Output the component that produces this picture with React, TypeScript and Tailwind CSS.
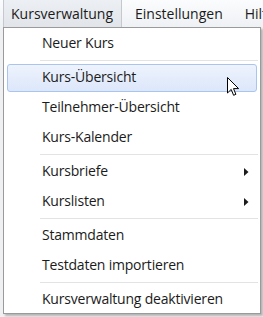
import React from "react";

type Entry = { label: string; sub?: boolean; active?: boolean } | "sep";

const entries: Entry[] = [
  { label: "Neuer Kurs" },
  "sep",
  { label: "Kurs-Übersicht", active: true },
  { label: "Teilnehmer-Übersicht" },
  { label: "Kurs-Kalender" },
  "sep",
  { label: "Kursbriefe", sub: true },
  { label: "Kurslisten", sub: true },
  "sep",
  { label: "Stammdaten" },
  { label: "Testdaten importieren" },
  "sep",
  { label: "Kursverwaltung deaktivieren" },
];

function Cursor() {
  return (
    <svg width="13" height="20" viewBox="0 0 13 20" className="absolute left-[222px] top-[14px]">
      <path
        d="M0.5 0.5 L0.5 16 L4.2 12.4 L6.6 18.3 L8.9 17.3 L6.5 11.6 L11.6 11.6 Z"
        fill="white"
        stroke="black"
        strokeWidth="1"
        strokeLinejoin="miter"
      />
    </svg>
  );
}

function Item({ label, sub, active }: { label: string; sub?: boolean; active?: boolean }) {
  return (
    <div className="relative h-[30px] flex items-center pb-[3px]">
      {active && (
        <div className="absolute left-[2px] right-[2px] top-[1px] bottom-[1px] rounded-[3px] border border-[#a9c4ee] bg-gradient-to-b from-[#eef3fd] to-[#dce7fa]" />
      )}
      <span className="relative pl-[37px] text-[14px] tracking-[-0.2px] text-[#1b1b1b]">{label}</span>
      {sub && (
        <svg width="5" height="8" viewBox="0 0 5 8" className="absolute left-[239px] top-[11px]">
          <path d="M0 0 L4.5 4 L0 8 Z" fill="#1b1b1b" />
        </svg>
      )}
      {active && <Cursor />}
    </div>
  );
}

export default function App() {
  return (
    <div
      className="w-[263px] h-[317px] bg-[#eef0f2] overflow-hidden relative"
      style={{ fontFamily: '"Open Sans", "Noto Sans", sans-serif' }}
    >
      <div className="h-[27px] bg-gradient-to-b from-[#fbfcfd] to-[#eef1f5] flex items-stretch text-[14px] text-[#1b1b1b] whitespace-nowrap">
        <div className="ml-[3px] w-[119px] shrink-0 border-x border-[#c5c9cf] bg-gradient-to-b from-[#eceff3] to-[#e1e5ea] flex items-center pl-[7px] pb-[1px]">
          Kursverwaltung
        </div>
        <div className="ml-[13px] shrink-0 flex items-center pb-[1px]">Einstellungen</div>
        <div className="ml-[22px] shrink-0 flex items-center pb-[1px]">Hilfe</div>
      </div>
      <div className="absolute left-[3px] top-[27px] w-[258px] h-[287px] bg-white border border-[#9a9a9a] shadow-[2px_2px_2px_rgba(0,0,0,0.25)] pt-[1px] px-[1px]">
        {entries.map((e, i) =>
          e === "sep" ? (
            <div key={i} className="h-[4px] pl-[35px] pr-[1px] flex flex-col justify-center">
              <div className="h-px bg-[#e2e3e3]" />
              <div className="h-px bg-white" />
            </div>
          ) : (
            <Item key={i} {...e} />
          )
        )}
      </div>
    </div>
  );
}
